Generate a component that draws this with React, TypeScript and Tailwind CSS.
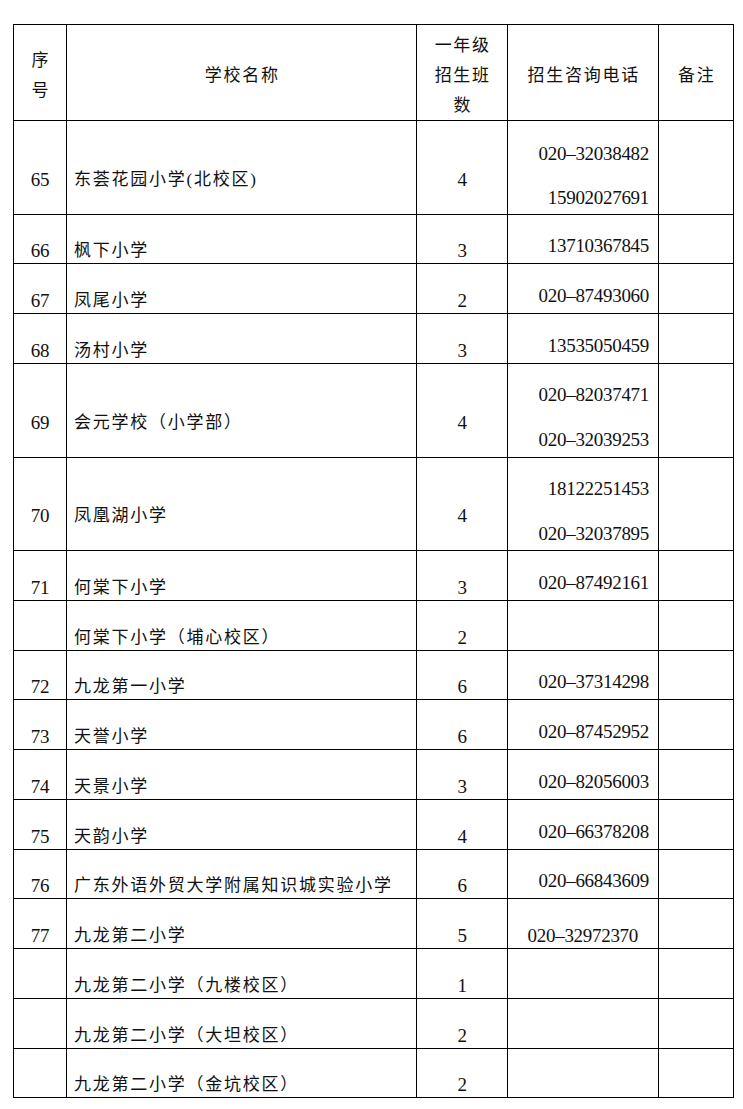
type Row = {
  no: string;
  name: string;
  classes: string;
  phones: string[];
  h: string;
  namePb: string;
  phoneBox: string;
};

const rows: Row[] = [
  { no: '65', name: '东荟花园小学(北校区)', classes: '4', phones: ['020–32038482', '15902027691'], h: 'h-[94px]', namePb: 'pb-[24px]', phoneBox: 'gap-[24px] pb-[6px] pr-[9px]' },
  { no: '66', name: '枫下小学', classes: '3', phones: ['13710367845'], h: 'h-[49px]', namePb: 'pb-[2px]', phoneBox: 'pb-[7px] pr-[9px]' },
  { no: '67', name: '凤尾小学', classes: '2', phones: ['020–87493060'], h: 'h-[50px]', namePb: 'pb-[2px]', phoneBox: 'pb-[7px] pr-[9px]' },
  { no: '68', name: '汤村小学', classes: '3', phones: ['13535050459'], h: 'h-[50px]', namePb: 'pb-[2px]', phoneBox: 'pb-[7px] pr-[9px]' },
  { no: '69', name: '会元学校（小学部）', classes: '4', phones: ['020–82037471', '020–32039253'], h: 'h-[94px]', namePb: 'pb-[24px]', phoneBox: 'gap-[25px] pb-[7px] pr-[9px]' },
  { no: '70', name: '凤凰湖小学', classes: '4', phones: ['18122251453', '020–32037895'], h: 'h-[93px]', namePb: 'pb-[24px]', phoneBox: 'gap-[25px] pb-[6px] pr-[9px]' },
  { no: '71', name: '何棠下小学', classes: '3', phones: ['020–87492161'], h: 'h-[50px]', namePb: 'pb-[2px]', phoneBox: 'pb-[7px] pr-[9px]' },
  { no: '', name: '何棠下小学（埔心校区）', classes: '2', phones: [], h: 'h-[50px]', namePb: 'pb-[2px]', phoneBox: 'pb-[7px] pr-[9px]' },
  { no: '72', name: '九龙第一小学', classes: '6', phones: ['020–37314298'], h: 'h-[49px]', namePb: 'pb-[2px]', phoneBox: 'pb-[7px] pr-[9px]' },
  { no: '73', name: '天誉小学', classes: '6', phones: ['020–87452952'], h: 'h-[50px]', namePb: 'pb-[2px]', phoneBox: 'pb-[7px] pr-[9px]' },
  { no: '74', name: '天景小学', classes: '3', phones: ['020–82056003'], h: 'h-[50px]', namePb: 'pb-[2px]', phoneBox: 'pb-[7px] pr-[9px]' },
  { no: '75', name: '天韵小学', classes: '4', phones: ['020–66378208'], h: 'h-[50px]', namePb: 'pb-[2px]', phoneBox: 'pb-[7px] pr-[9px]' },
  { no: '76', name: '广东外语外贸大学附属知识城实验小学', classes: '6', phones: ['020–66843609'], h: 'h-[49px]', namePb: 'pb-[2px]', phoneBox: 'pb-[7px] pr-[9px]' },
  { no: '77', name: '九龙第二小学', classes: '5', phones: ['020–32972370'], h: 'h-[50px]', namePb: 'pb-[2px]', phoneBox: 'pb-[2px] pr-[20px]' },
  { no: '', name: '九龙第二小学（九楼校区）', classes: '1', phones: [], h: 'h-[50px]', namePb: 'pb-[2px]', phoneBox: 'pb-[7px] pr-[9px]' },
  { no: '', name: '九龙第二小学（大坦校区）', classes: '2', phones: [], h: 'h-[50px]', namePb: 'pb-[2px]', phoneBox: 'pb-[7px] pr-[9px]' },
  { no: '', name: '九龙第二小学（金坑校区）', classes: '2', phones: [], h: 'h-[49px]', namePb: 'pb-[2px]', phoneBox: 'pb-[7px] pr-[9px]' },
];

const grid = 'grid grid-cols-[53px_350px_91px_151px_75px] border-b border-black';
const cjk = 'text-[17px] tracking-[1.75px] leading-[20px]';
const num = 'text-[19px] tracking-[-0.3px] leading-[20px]';

export default function App() {
  return <div className="min-h-[1109px] w-[743px] bg-white pl-[13px] pt-[24px] text-[#111]" style={{ fontFamily: '"Liberation Serif", "Noto Sans CJK SC", serif' }}>
    <div className="w-[721px] border-l border-t border-black">
      <div className={`${grid} h-[96px]`}>
        <div className="flex items-center justify-center border-r border-black pt-[6px] text-[17px] leading-[30px] text-center">序<br />号</div>
        <div className={`flex items-center justify-center border-r border-black pt-[6px] pl-[1.5px] ${cjk}`}>学校名称</div>
        <div className="flex items-center justify-center border-r border-black pt-[6px] pl-[1.5px] text-[17px] tracking-[1.75px] leading-[30px] text-center">一年级<br />招生班<br />数</div>
        <div className={`flex items-center justify-center border-r border-black pt-[6px] pl-[1.5px] ${cjk}`}>招生咨询电话</div>
        <div className={`flex items-center justify-center border-r border-black pt-[6px] pl-[1.5px] ${cjk}`}>备注</div>
      </div>
      {rows.map((r, i) => <div key={i} className={`${grid} ${r.h}`}>
        <div className={`flex items-end justify-center border-r border-black ${r.namePb} ${num}`}>{r.no}</div>
        <div className={`flex items-end border-r border-black pl-[7px] ${r.namePb} ${cjk} whitespace-nowrap`}>{r.name}</div>
        <div className={`flex items-end justify-center border-r border-black ${r.namePb} ${num}`}>{r.classes}</div>
        <div className={`flex flex-col items-end justify-end border-r border-black ${r.phoneBox} ${num}`}>
          {r.phones.map(p => <span key={p}>{p}</span>)}
        </div>
        <div className="border-r border-black" />
      </div>)}
    </div>
  </div>;
}
